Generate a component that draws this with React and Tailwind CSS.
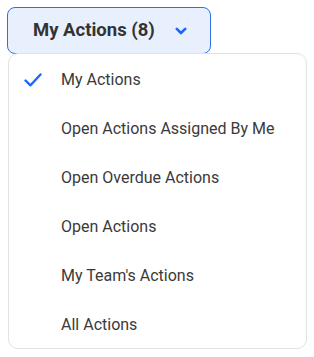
import { useState } from "react";

const options = [
  "My Actions",
  "Open Actions Assigned By Me",
  "Open Overdue Actions",
  "Open Actions",
  "My Team's Actions",
  "All Actions",
];

export default function App() {
  const [selected, setSelected] = useState(0);

  return (
    <main className="min-h-screen bg-white pl-[7px] pt-[7px] font-['Roboto',sans-serif]">
      <button
        type="button"
        className="flex h-[47px] w-[204px] items-center gap-[20px] rounded-[8px] border border-[#2f6fe4] bg-[#e8f0fe] pl-[25px] text-[18.5px] font-bold text-[#333333]"
      >
        My Actions (8)
        <ChevronIcon />
      </button>

      {/* Menu */}
      <ul className="-mt-px ml-px w-[299px] rounded-[10px] border border-[#e2e2e2] bg-white">
        {options.map((label, i) => (
          <li
            key={label}
            onClick={() => setSelected(i)}
            className="flex h-[49px] cursor-pointer items-center pt-[2px] text-[16px] text-[#3a3a3a]"
          >
            <span className="flex w-[52px] justify-end pr-[19px]">
              {selected === i && <CheckIcon />}
            </span>
            {label}
          </li>
        ))}
      </ul>
    </main>
  );
}

function ChevronIcon() {
  return (
    <svg viewBox="0 0 12 8" className="h-[8px] w-[12px]" fill="none" stroke="#1a66ff" strokeWidth="2.6" strokeLinecap="round" strokeLinejoin="round">
      <path d="M1.8 1.8 6 6 10.2 1.8" />
    </svg>
  );
}

function CheckIcon() {
  return (
    <svg viewBox="0 0 18 14" className="h-[14px] w-[18px]" fill="none" stroke="#1a66ff" strokeWidth="2.4" strokeLinecap="round" strokeLinejoin="round">
      <path d="M1.5 7.5 6.5 12.3 16.5 1.5" />
    </svg>
  );
}
